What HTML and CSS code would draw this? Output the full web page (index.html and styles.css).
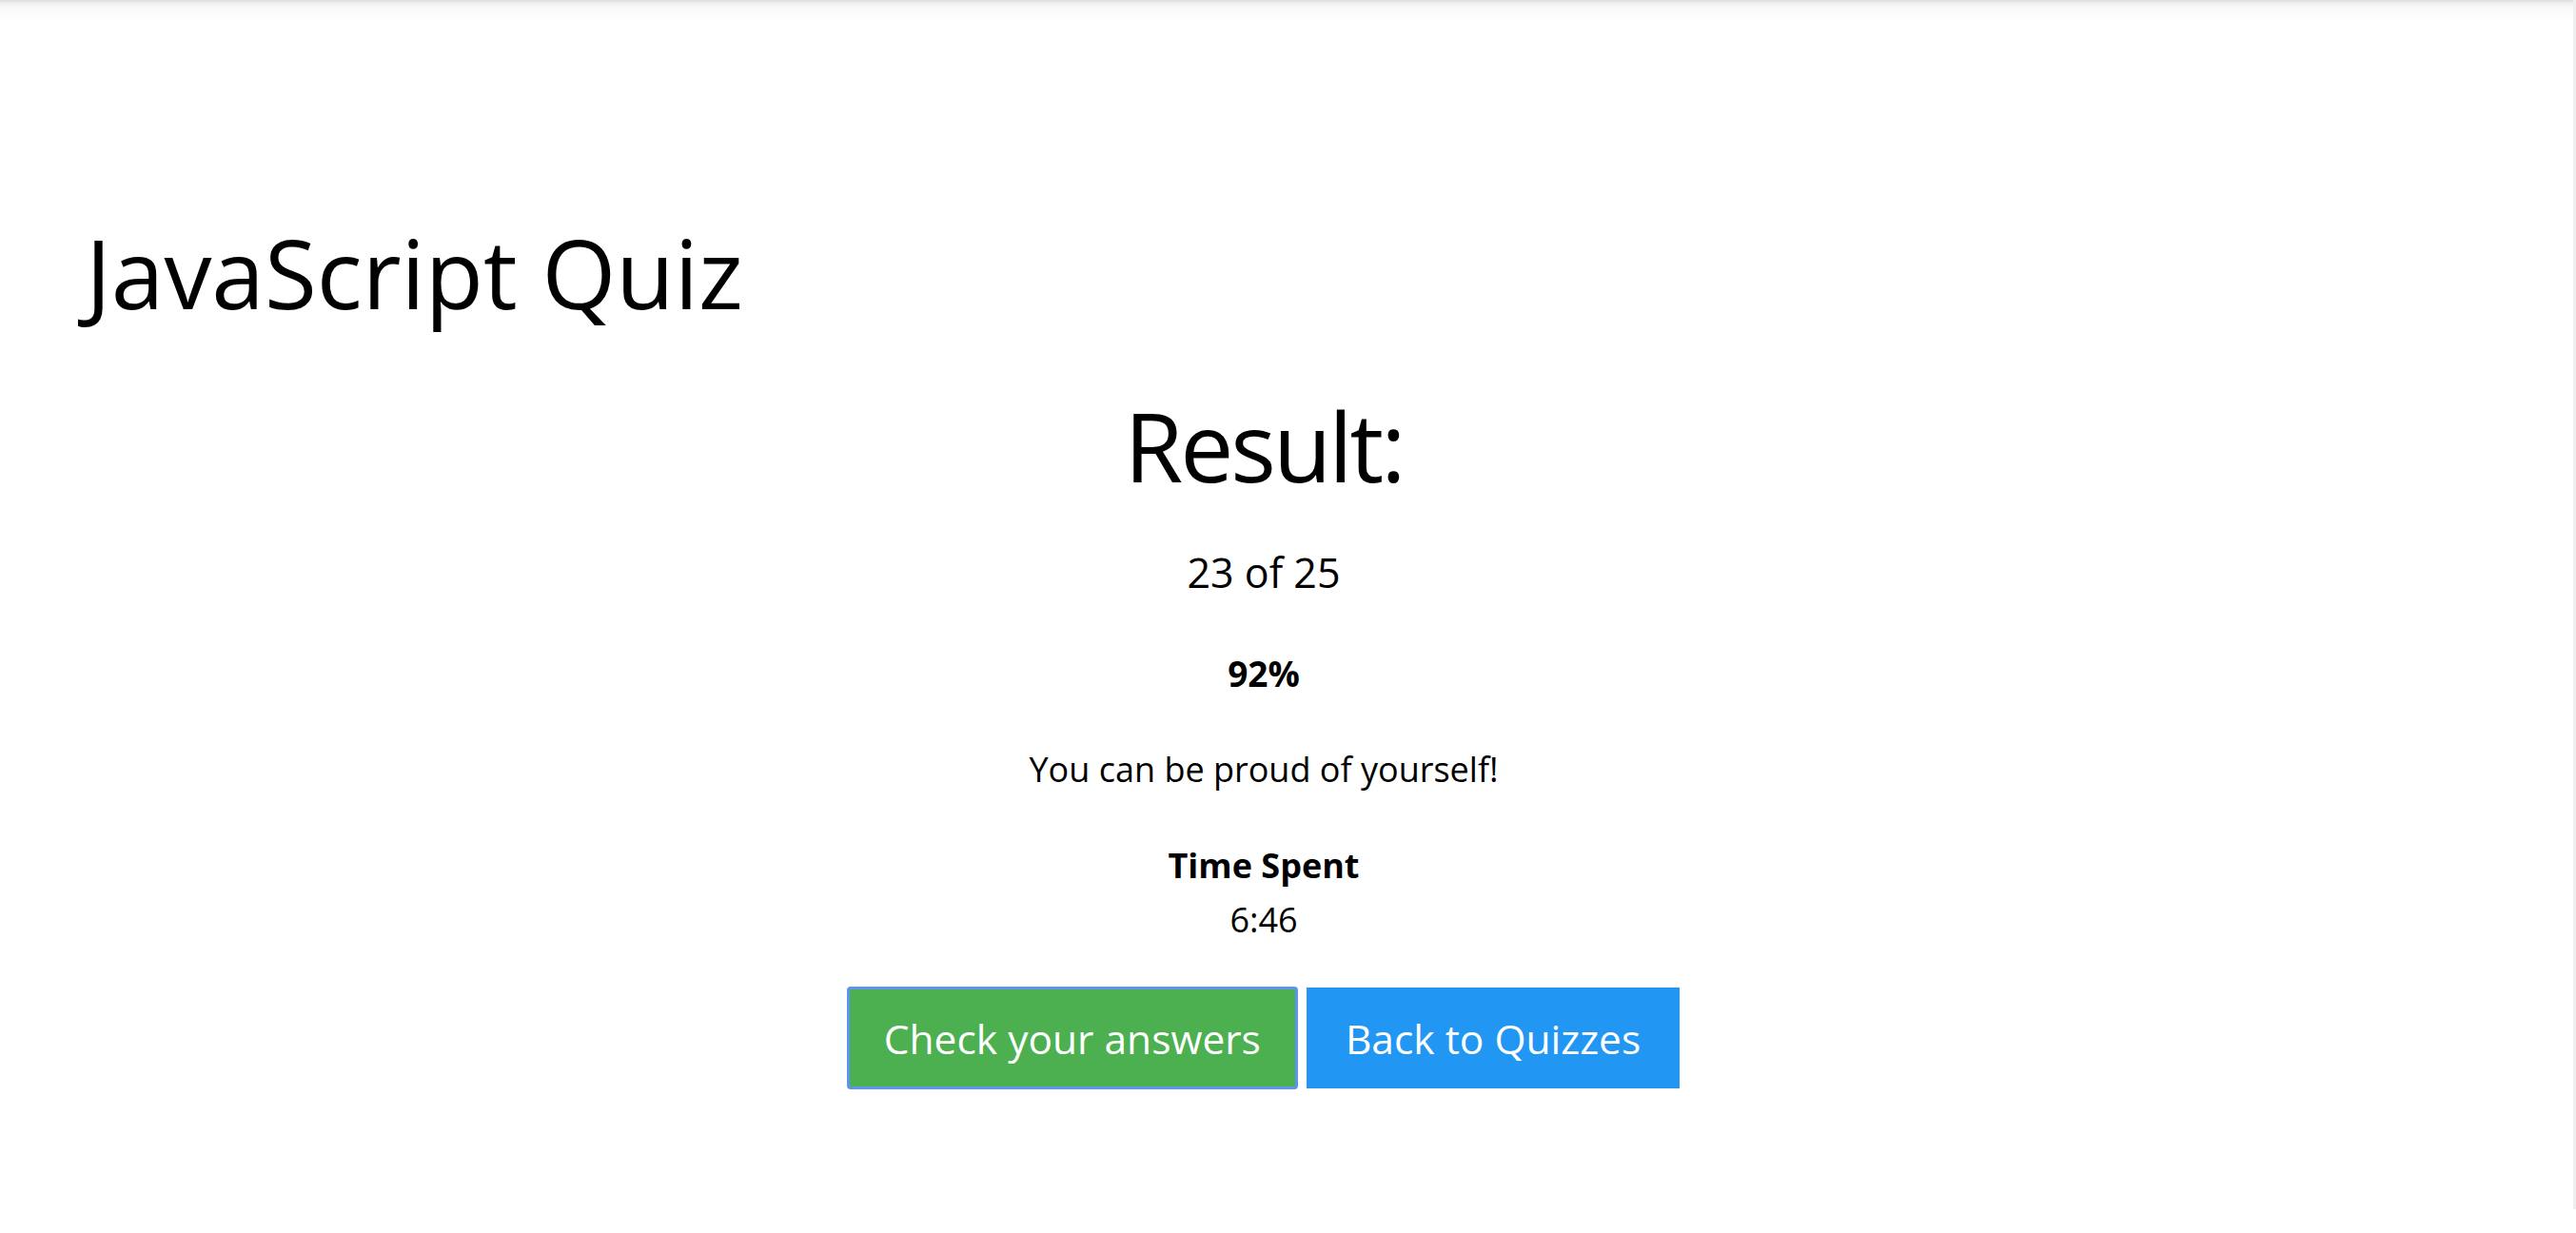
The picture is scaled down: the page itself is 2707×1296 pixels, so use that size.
FILE: index.html
```html
<!DOCTYPE html>
<html lang="en">
<head>
<meta charset="utf-8">
<title>JavaScript Quiz</title>
<link rel="stylesheet" href="styles.css">
</head>
<body>
<div class="page">
  <div class="main">
    <div class="topshade"></div>
    <h1 class="title">JavaScript Quiz</h1>
    <section class="result">
      <h2 class="result-head">Result:</h2>
      <p class="score">23 of 25</p>
      <p class="percent">92%</p>
      <p class="message">You can be proud of yourself!</p>
      <p class="time"><b class="time-label">Time Spent</b><br><span class="time-value">6:46</span></p>
      <div class="actions">
        <button class="btn btn-green">Check your answers</button>
        <button class="btn btn-blue">Back to Quizzes</button>
      </div>
    </section>
  </div>
  <div class="scroll-strip"></div>
</div>
</body>
</html>
```
FILE: styles.css
```css
html, body {
  margin: 0;
  padding: 0;
  background: #ffffff;
}
body {
  font-family: "Open Sans", "Noto Sans", sans-serif;
  color: #000;
}
.page {
  display: flex;
  align-items: flex-start;
  min-height: 1296px;
}
.main {
  flex: 1;
  padding: 0 64px 0 16px;
}
.topshade {
  height: 24px;
  margin: 0 -64px 0 -16px;
  background: linear-gradient(to bottom, #dcdcdc 0, #f2f2f2 4px, #fafafa 10px, #ffffff 24px);
}
.scroll-strip {
  width: 3px;
  height: 1271px;
  background: #efefef;
  flex: none;
}
.title {
  margin: 200.2px 0 0 0;
  padding-left: 74px;
  font-size: 100px;
  line-height: 124px;
  font-weight: 400;
}
.result {
  text-align: center;
}
.result-head {
  margin: 57px 0 0 0;
  font-size: 100px;
  line-height: 126px;
  font-weight: 400;
  letter-spacing: -3px;
}
.score {
  margin: 40.8px 0 0 0;
  font-size: 43px;
  line-height: 60px;
}
.percent {
  margin: 50px 0 0 0;
  font-size: 37px;
  line-height: 52px;
  font-weight: 700;
}
.message {
  margin: 49px 0 0 0;
  font-size: 36px;
  line-height: 52px;
}
.time {
  margin: 46px 0 0 0;
  font-size: 36px;
  line-height: 57px;
}
.time-label {
  font-weight: 700;
}
.actions {
  display: flex;
  justify-content: center;
  gap: 10px;
  margin-top: 43px;
}
.btn {
  font-family: inherit;
  font-size: 42.5px;
  line-height: 60px;
  padding: 24.5px 38px 21.5px;
  border: 0;
  color: #ffffff;
  cursor: pointer;
}
.btn-green {
  background: #4caf50;
  border-radius: 3px;
  box-shadow: 0 0 0 1px #5b95f0, inset 0 0 0 2px #5b95f0;
}
.btn-blue {
  background: #2196f3;
  padding-left: 41px;
  padding-right: 41px;
}
```
